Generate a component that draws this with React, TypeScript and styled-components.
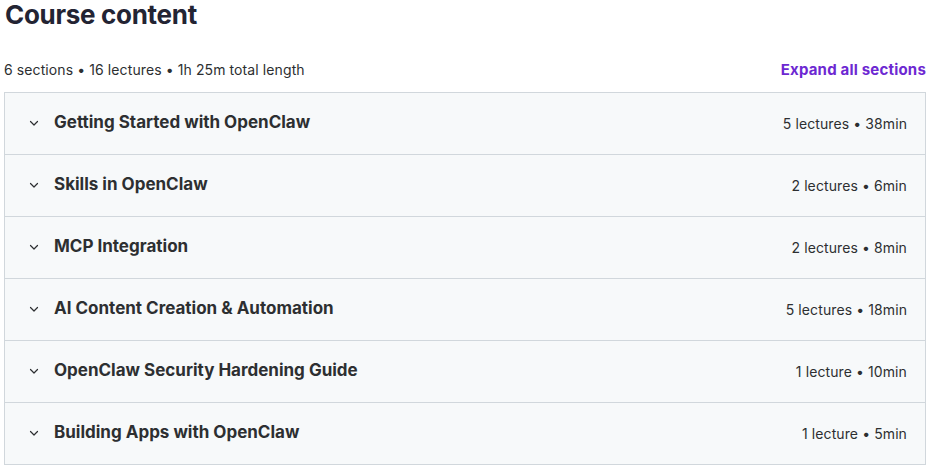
import * as React from "react";
import styled, { createGlobalStyle } from "styled-components";

const GlobalStyle = createGlobalStyle`
    body {
        margin: 0;
        background: #ffffff;
        font-family: Inter, "Noto Sans", "Liberation Sans", sans-serif;
        color: #2d2f31;
    }
`;

const Page = styled.div`
    padding: 0 3px 0 4px;
`;

const Title = styled.h2`
    margin: 0 0 0 1px;
    font-size: 26px;
    line-height: 30px;
    font-weight: 700;
    letter-spacing: -0.3px;
    color: #232433;
`;

const SummaryBar = styled.div`
    display: flex;
    justify-content: space-between;
    align-items: center;
    margin-top: 29px;
    height: 20px;
    margin-bottom: 13px;
`;

const Summary = styled.span`
    font-size: 14px;
    letter-spacing: 0.1px;
    color: #2d2f31;
`;

const ExpandLink = styled.button`
    border: none;
    background: none;
    padding: 0;
    font-family: inherit;
    font-size: 15px;
    font-weight: 700;
    letter-spacing: 0.2px;
    color: #6d28d2;
    cursor: pointer;
`;

const Sections = styled.div`
    border: 1px solid #d1d7dc;
    border-bottom: none;
`;

const SectionRow = styled.div`
    display: flex;
    align-items: center;
    box-sizing: border-box;
    height: 62px;
    padding: 0 18px 3px 23px;
    background: #f7f9fa;
    border-bottom: 1px solid #d1d7dc;
`;

const Chevron = styled.svg`
    width: 12px;
    height: 12px;
    flex-shrink: 0;
    margin-right: 14px;
    margin-top: 1px;
`;

const SectionTitle = styled.span`
    flex: 1;
    font-size: 17px;
    font-weight: 700;
    color: #2d2f31;
`;

const SectionMeta = styled.span`
    font-size: 14px;
    letter-spacing: 0.1px;
    color: #2d2f31;
    margin-top: 3px;
`;

const sections = [
    { title: "Getting Started with OpenClaw", meta: "5 lectures • 38min" },
    { title: "Skills in OpenClaw", meta: "2 lectures • 6min" },
    { title: "MCP Integration", meta: "2 lectures • 8min" },
    { title: "AI Content Creation & Automation", meta: "5 lectures • 18min" },
    { title: "OpenClaw Security Hardening Guide", meta: "1 lecture • 10min" },
    { title: "Building Apps with OpenClaw", meta: "1 lecture • 5min" },
];

const App = () => {
    return (
        <Page>
            <GlobalStyle />
            <Title>Course content</Title>
            <SummaryBar>
                <Summary>6 sections • 16 lectures • 1h 25m total length</Summary>
                <ExpandLink>Expand all sections</ExpandLink>
            </SummaryBar>
            <Sections>
                {sections.map((s) => (
                    <SectionRow key={s.title}>
                        <Chevron viewBox="0 0 12 12">
                            <path d="M2.5 4.5 L6 8 L9.5 4.5" fill="none" stroke="#2d2f31" strokeWidth="1.2" strokeLinecap="round" strokeLinejoin="round" />
                        </Chevron>
                        <SectionTitle>{s.title}</SectionTitle>
                        <SectionMeta>{s.meta}</SectionMeta>
                    </SectionRow>
                ))}
            </Sections>
        </Page>
    );
};

export default App;
